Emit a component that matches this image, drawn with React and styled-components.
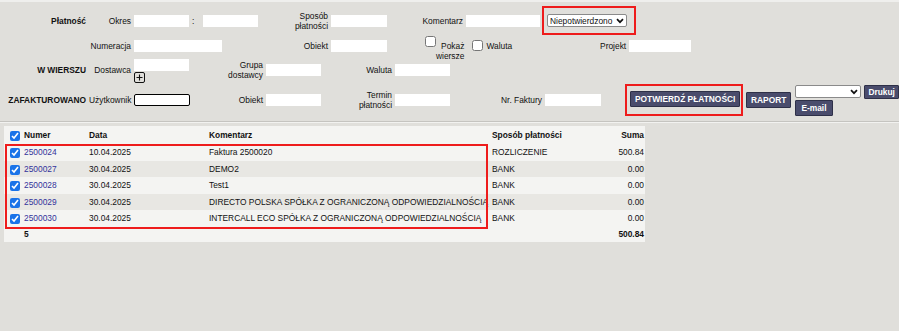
import styled, { createGlobalStyle } from "styled-components";

const GlobalStyle = createGlobalStyle`
  html, body {
    margin: 0;
    background: #e0dfdb;
  }
  body {
    font-family: "Liberation Sans", Arial, sans-serif;
    font-size: 8.4px;
    color: #111;
  }
`;

const Page = styled.div`
  border-top: 2px solid #efefed;
  min-height: 329px;
`;

const Form = styled.div`
  display: flex;
  flex-direction: column;
  padding-top: 4px;
`;

const Row = styled.div`
  display: flex;
  align-items: center;
  height: ${(p) => p.$h}px;
`;

const Section = styled.div`
  width: 89px;
  flex: none;
  box-sizing: border-box;
  padding-right: 3px;
  text-align: right;
  font-weight: bold;
  white-space: nowrap;
`;

const Label = styled.div`
  width: ${(p) => p.$w}px;
  flex: none;
  box-sizing: border-box;
  padding-right: 3px;
  text-align: right;
  white-space: nowrap;
  line-height: 10px;
`;

const Field = styled.input`
  width: ${(p) => p.$w}px;
  height: 12px;
  flex: none;
  box-sizing: border-box;
  border: none;
  background: #fff;
  padding: 0 2px;
  margin: 0;
  font: inherit;
  outline: none;
  &.focused {
    border: 1.5px solid #000;
    border-radius: 2px;
  }
`;

const Colon = styled.span`
  width: 14px;
  flex: none;
  padding-left: 3px;
  box-sizing: border-box;
`;

const Spacer = styled.div`
  width: ${(p) => p.$w}px;
  flex: none;
`;

const Highlight = styled.div`
  flex: none;
  box-sizing: border-box;
  border: 2px solid #ee1c1c;
  width: ${(p) => p.$w}px;
  height: ${(p) => p.$h}px;
  margin-left: ${(p) => p.$ml || 0}px;
  padding: ${(p) => p.$pad};
  display: flex;
  align-items: flex-start;
`;

const SelectBox = styled.div`
  position: relative;
  flex: none;
  display: inline-flex;
  width: ${(p) => p.$w}px;
  height: ${(p) => p.$h || 12}px;
`;

const Select = styled.select`
  appearance: none;
  width: 100%;
  height: 100%;
  box-sizing: border-box;
  font-family: "Liberation Sans", Arial, sans-serif;
  font-size: 8.4px;
  padding: 0 12px 0 2px;
  margin: 0;
  border: 1px solid #8a8a8a;
  border-radius: 2px;
  background: #fff;
  color: #111;
`;

const Chevron = styled.svg`
  position: absolute;
  right: 3px;
  top: 50%;
  margin-top: -3px;
  pointer-events: none;
`;

const ChevronIcon = () => (
  <Chevron width="8" height="6" viewBox="0 0 8 6">
    <path d="M1 1.2l3 3 3-3" fill="none" stroke="#111" strokeWidth="1.7" />
  </Chevron>
);

const Check = styled.input.attrs({ type: "checkbox" })`
  width: ${(p) => p.$s || 10}px;
  height: ${(p) => p.$s || 10}px;
  margin: 0;
  flex: none;
  accent-color: #1a73e8;
`;

const CheckLabel = styled.div`
  display: flex;
  align-items: flex-start;
  gap: ${(p) => p.$gap ?? 3}px;
  align-self: ${(p) => p.$self || "center"};
  margin-top: ${(p) => p.$mt || 0}px;
  line-height: 10px;
`;

const StackLabel = styled.div`
  text-align: right;
  margin-top: 5px;
`;

const Stack = styled.div`
  display: flex;
  flex-direction: column;
  align-items: ${(p) => p.$align || "flex-start"};
  gap: ${(p) => p.$gap || 0}px;
  margin-left: ${(p) => p.$ml || 0}px;
  margin-top: ${(p) => p.$mt || 0}px;
`;

const Button = styled.button`
  flex: none;
  height: ${(p) => p.$h || 16}px;
  padding: 0 ${(p) => p.$px || 5}px;
  margin: 0;
  margin-left: ${(p) => p.$ml || 0}px;
  margin-top: ${(p) => p.$mt || 0}px;
  background: #4a4c6c;
  color: #fff;
  font-family: "Liberation Sans", Arial, sans-serif;
  font-size: 8.4px;
  font-weight: bold;
  border: 1px solid #2e3048;
  border-radius: 1px;
  white-space: nowrap;
`;

const Inline = styled.div`
  display: flex;
  align-items: center;
  gap: ${(p) => p.$gap || 0}px;
`;

const Separator = styled.div`
  margin-top: 5px;
  border-top: 1px solid #c5c4c0;
  border-bottom: 1px solid #f2f2f0;
`;

const Panel = styled.div`
  position: relative;
  margin: 3px 0 0 4px;
  width: 641px;
  background: #f4f4f2;
`;

const Table = styled.table`
  width: 100%;
  table-layout: fixed;
  border-collapse: collapse;
  font-size: 8.4px;
`;

const HeadRow = styled.tr`
  height: 18px;
  & > * {
    padding-top: 2px;
  }
`;

const Th = styled.th`
  padding: 0 ${(p) => p.$pr || 0}px 0 0;
  text-align: ${(p) => p.$align || "left"};
  font-weight: bold;
  vertical-align: middle;
  white-space: nowrap;
`;

const Tr = styled.tr`
  height: ${(p) => p.$h || 16.5}px;
  background: ${(p) => (p.$odd ? "#e8e7e3" : "#f4f4f2")};
`;

const Td = styled.td`
  padding: 0 ${(p) => p.$pr || 0}px 0 0;
  text-align: ${(p) => p.$align || "left"};
  white-space: nowrap;
  font-weight: ${(p) => (p.$bold ? "bold" : "normal")};
  vertical-align: middle;
`;

const CheckCell = styled.td`
  box-sizing: border-box;
  padding: 0 0 0 6px;
  text-align: left;
  vertical-align: middle;
  line-height: 0;
  & input {
    margin-top: 2px;
  }
`;

const DocLink = styled.a`
  color: #33339b;
  text-decoration: none;
`;

const RowsMark = styled.div`
  position: absolute;
  left: 1px;
  top: 18px;
  width: 483px;
  height: 85px;
  border: 2px solid #ee1c1c;
  box-sizing: border-box;
  pointer-events: none;
`;

const PlusIcon = () => (
  <svg width="11" height="11" viewBox="0 0 11 11">
    <rect x="0.5" y="0.5" width="10" height="10" rx="1.5" fill="none" stroke="#111" strokeWidth="1" />
    <path d="M5.5 2.5v6M2.5 5.5h6" stroke="#111" strokeWidth="1.1" />
  </svg>
);

const rows = [
  { nr: "2500024", data: "10.04.2025", kom: "Faktura 2500020", spos: "ROZLICZENIE", suma: "500.84" },
  { nr: "2500027", data: "30.04.2025", kom: "DEMO2", spos: "BANK", suma: "0.00" },
  { nr: "2500028", data: "30.04.2025", kom: "Test1", spos: "BANK", suma: "0.00" },
  { nr: "2500029", data: "30.04.2025", kom: "DIRECTO POLSKA SPÓŁKA Z OGRANICZONĄ ODPOWIEDZIALNOŚCIĄ", spos: "BANK", suma: "0.00" },
  { nr: "2500030", data: "30.04.2025", kom: "INTERCALL ECO SPÓŁKA Z OGRANICZONĄ ODPOWIEDZIALNOŚCIĄ", spos: "BANK", suma: "0.00" },
];

export default function App() {
  return (
    <Page>
      <GlobalStyle />
      <Form>
        <Row $h={29}>
          <Section>Płatność</Section>
          <Label $w={45}>Okres</Label>
          <Field $w={55} />
          <Colon>:</Colon>
          <Field $w={55} />
          <Label $w={73}>
            Sposób
            <br />
            płatności
          </Label>
          <Field $w={56} />
          <Label $w={79}>Komentarz</Label>
          <Field $w={74} />
          <Highlight $w={94} $h={29} $ml={2} $pad="6px 0 0 3px">
            <SelectBox $w={80} $h={13}>
              <Select defaultValue="n">
                <option value="n">Niepotwierdzono</option>
              </Select>
              <ChevronIcon />
            </SelectBox>
          </Highlight>
        </Row>

        <Row $h={21}>
          <Label $w={134}>Numeracja</Label>
          <Field $w={88} />
          <Label $w={109}>Obiekt</Label>
          <Field $w={56} />
          <Spacer $w={38} />
          <CheckLabel $self="flex-start" $mt={1} $gap={0}>
            <Check $s={11} />
            <StackLabel>
              Pokaż
              <br />
              wiersze
            </StackLabel>
          </CheckLabel>
          <Spacer $w={8} />
          <CheckLabel>
            <Check $s={11} />
            <span style={{ marginTop: 1 }}>Waluta</span>
          </CheckLabel>
          <Label $w={117}>Projekt</Label>
          <Field $w={62} />
        </Row>

        <Row $h={28}>
          <Section>W WIERSZU</Section>
          <Label $w={45}>Dostawca</Label>
          <Stack $gap={1} $mt={1}>
            <Field $w={55} />
            <PlusIcon />
          </Stack>
          <Label $w={77}>
            Grupa
            <br />
            dostawcy
          </Label>
          <Field $w={55} />
          <Label $w={74}>Waluta</Label>
          <Field $w={55} />
        </Row>

        <Row $h={32}>
          <Section>ZAFAKTUROWANO</Section>
          <Label $w={45}>Użytkownik</Label>
          <Field $w={56} className="focused" />
          <Label $w={76}>Obiekt</Label>
          <Field $w={55} />
          <Label $w={74}>
            Termin
            <br />
            płatności
          </Label>
          <Field $w={55} />
          <Label $w={95}>Nr. Faktury</Label>
          <Field $w={56} />
          <Highlight $w={118} $h={32} $ml={24} $pad="5px 0 0 3px">
            <Button $px={4}>POTWIERDŹ PŁATNOŚCI</Button>
          </Highlight>
          <Button $ml={3} $px={4}>RAPORT</Button>
          <Stack $ml={4} $gap={1}>
            <Inline $gap={3}>
              <SelectBox $w={66} $h={13}>
                <Select defaultValue="">
                  <option value=""></option>
                </Select>
                <ChevronIcon />
              </SelectBox>
              <Button $h={14} $px={3}>Drukuj</Button>
            </Inline>
            <Button $h={16} $px={5}>E-mail</Button>
          </Stack>
        </Row>
      </Form>

      <Separator />

      <Panel>
        <Table>
          <colgroup>
            <col style={{ width: 20 }} />
            <col style={{ width: 65 }} />
            <col style={{ width: 120 }} />
            <col style={{ width: 283 }} />
            <col style={{ width: 110 }} />
            <col />
          </colgroup>
          <thead>
            <HeadRow>
              <CheckCell as="th">
                <Check defaultChecked />
              </CheckCell>
              <Th>Numer</Th>
              <Th>Data</Th>
              <Th>Komentarz</Th>
              <Th>Sposób płatności</Th>
              <Th $align="right" $pr={1}>Suma</Th>
            </HeadRow>
          </thead>
          <tbody>
            {rows.map((r, i) => (
              <Tr key={r.nr} $odd={i % 2 === 1}>
                <CheckCell>
                  <Check defaultChecked />
                </CheckCell>
                <Td>
                  <DocLink href="#">{r.nr}</DocLink>
                </Td>
                <Td>{r.data}</Td>
                <Td>{r.kom}</Td>
                <Td>{r.spos}</Td>
                <Td $align="right" $pr={1}>{r.suma}</Td>
              </Tr>
            ))}
            <Tr $h={15}>
              <td />
              <Td $bold>5</Td>
              <td />
              <td />
              <td />
              <Td $align="right" $bold $pr={1}>500.84</Td>
            </Tr>
          </tbody>
        </Table>
        <RowsMark />
      </Panel>
    </Page>
  );
}
